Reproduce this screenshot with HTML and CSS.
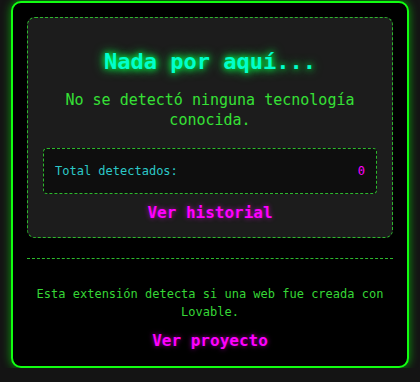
FILE: index.html
```html
<!DOCTYPE html>
<html lang="es">
<head>
    <meta charset="UTF-8">
    <meta name="viewport" content="width=device-width, initial-scale=1.0">
    <title>Lovable Detector</title>
    <link rel="stylesheet" href="styles.css">
</head>
<body>
    <div class="popup">
        <div class="result_card">
            <h2 class="title">Nada por aquí...</h2>
            <p class="message">No se detectó ninguna tecnología conocida.</p>
            <div class="stats">
                <span class="stats_label">Total detectados:</span>
                <span class="stats_value">0</span>
            </div>
            <a href="#" class="link">Ver historial</a>
        </div>
        <div class="divider"></div>
        <p class="footer_text">Esta extensión detecta si una web fue creada con Lovable.</p>
        <a href="#" class="link">Ver proyecto</a>
    </div>
</body>
</html>
```

FILE: styles.css
```css
* {
    margin: 0;
    padding: 0;
    box-sizing: border-box;
}

body {
    background: #141414;
    font-family: "DejaVu Sans Mono", "Liberation Mono", monospace;
    padding: 1px 0 0 11px;
}

.popup {
    width: 398px;
    height: 367px;
    background: #000;
    border: 2px solid #1f1;
    border-radius: 10px;
    box-shadow: 0 0 10px rgba(0, 255, 0, 0.6);
    padding: 14px;
    text-align: center;
}

.result_card {
    background: #1c1c1c;
    border: 1px dashed #2db82d;
    border-radius: 8px;
    padding: 31px 15px 14px;
}

.title {
    font-size: 22px;
    line-height: 26px;
    font-weight: bold;
    color: #00ffcc;
    text-shadow: 0 0 6px #00ff44, 0 0 12px #00ff44;
}

.message {
    margin-top: 15px;
    font-size: 15px;
    line-height: 20px;
    color: #36e036;
}

.stats {
    margin-top: 18px;
    display: flex;
    justify-content: space-between;
    background: #0e0e0e;
    border: 1px dashed #2db82d;
    border-radius: 4px;
    padding: 14px 11px;
    font-size: 12px;
    line-height: 16px;
}

.stats_label {
    color: #2cc8c8;
}

.stats_value {
    color: #ff00ff;
}

.link {
    display: block;
    margin-top: 9px;
    font-size: 16px;
    line-height: 20px;
    font-weight: bold;
    color: #ff00ff;
    text-decoration: none;
    text-shadow: 0 0 5px rgba(255, 0, 255, 0.6);
}

.divider {
    margin-top: 20px;
    border-top: 1px dashed #2db82d;
}

.footer_text {
    margin: 27px auto 0;
    font-size: 12px;
    line-height: 17.5px;
    color: #36d636;
}

.footer_text + .link {
    margin-top: 10px;
}
```
